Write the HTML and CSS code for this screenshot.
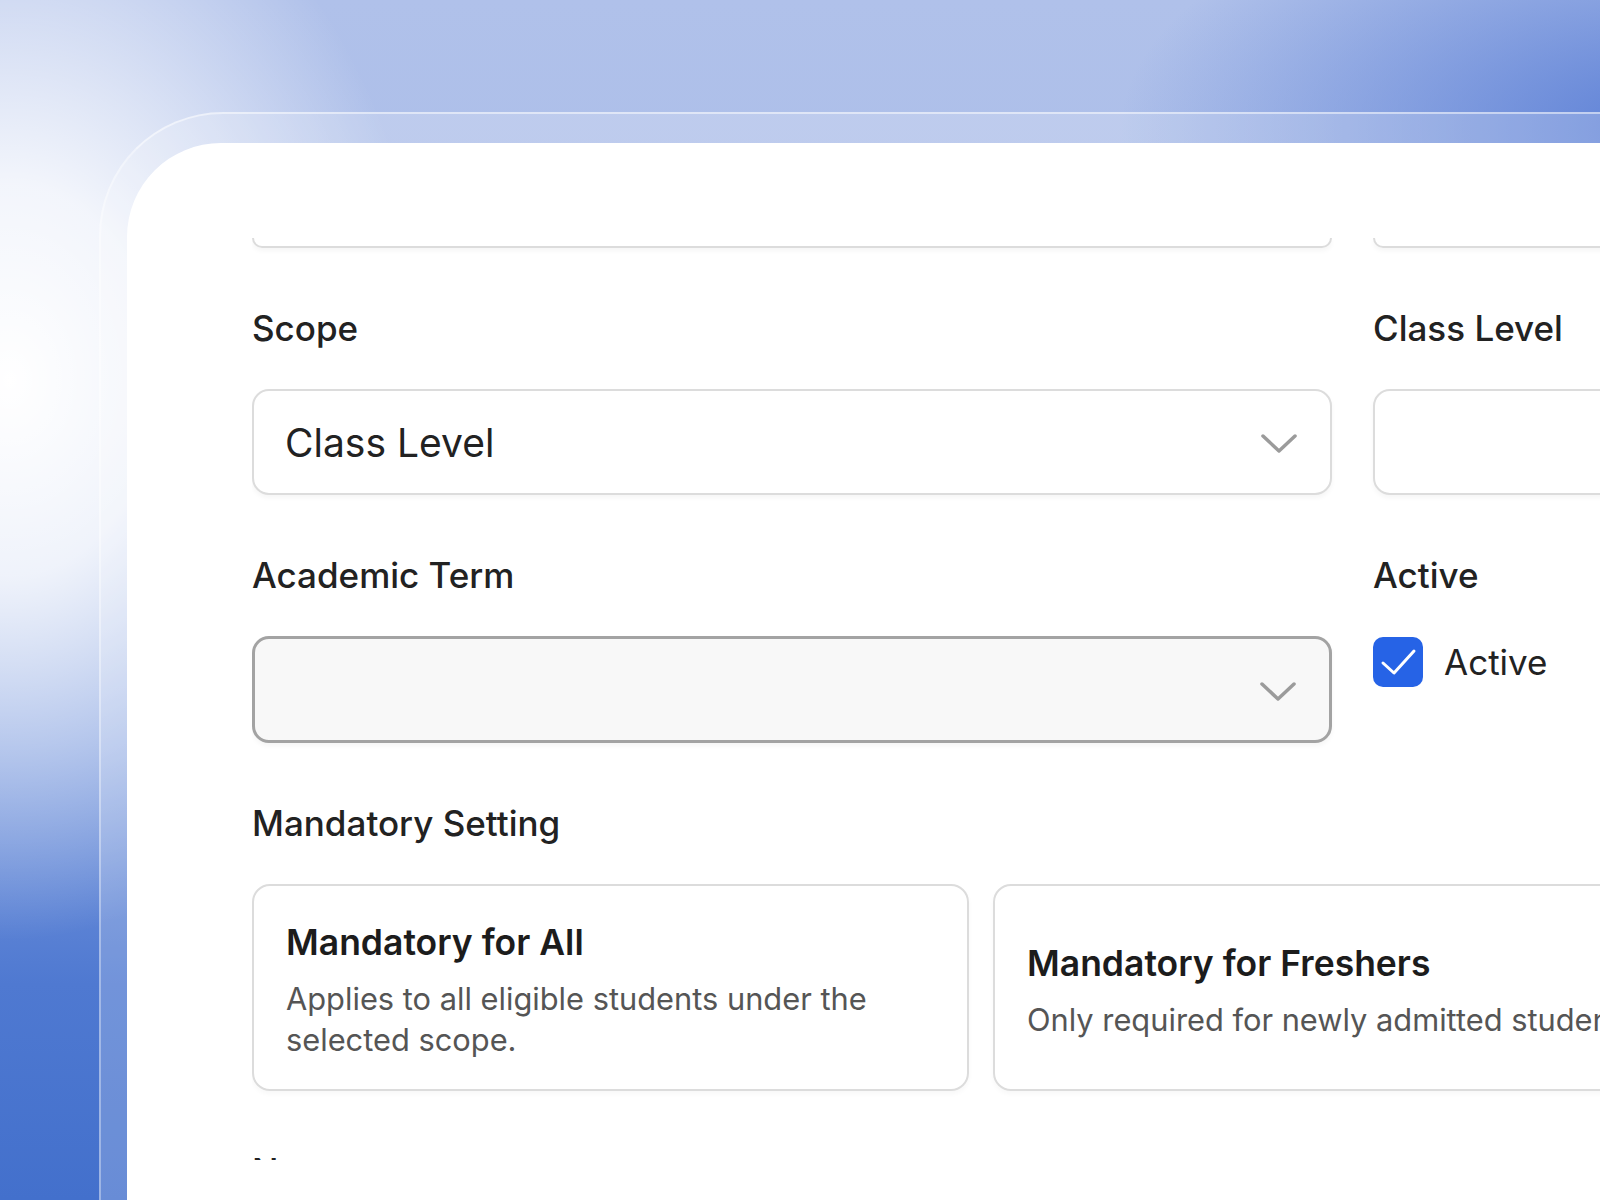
FILE: index.html
```html
<!DOCTYPE html>
<html lang="en">
<head>
    <meta charset="UTF-8">
    <meta name="viewport" content="width=device-width, initial-scale=1.0">
    <title>Course Requirement</title>
    <link rel="stylesheet" href="styles.css">
</head>
<body>
    <div class="frame">
        <div class="card">
            <div class="form-scroll">
                <div class="form-grid">
                    <!-- bottom edge of the fields above, scrolled out of view -->
                    <div class="stub"></div>
                    <div class="stub"></div>

                    <div class="field">
                        <label class="field-label">Scope</label>
                        <div class="select">
                            <span class="select-value">Class Level</span>
                            <svg class="chevron" width="36" height="20" viewBox="0 0 36 20">
                                <path d="M2 2 L18 17 L34 2" fill="none" stroke="#9b9b9b" stroke-width="3.5" stroke-linecap="round" stroke-linejoin="round"/>
                            </svg>
                        </div>
                    </div>
                    <div class="field">
                        <label class="field-label">Class Level</label>
                        <div class="select"></div>
                    </div>

                    <div class="field">
                        <label class="field-label">Academic Term</label>
                        <div class="select select-focus">
                            <span class="select-value"></span>
                            <svg class="chevron" width="36" height="20" viewBox="0 0 36 20">
                                <path d="M2 2 L18 17 L34 2" fill="none" stroke="#9b9b9b" stroke-width="3.5" stroke-linecap="round" stroke-linejoin="round"/>
                            </svg>
                        </div>
                    </div>
                    <div class="field">
                        <label class="field-label">Active</label>
                        <div class="check-row">
                            <span class="checkbox">
                                <svg width="50" height="50" viewBox="0 0 50 50">
                                    <path d="M10 26 L21 36 L41 14" fill="none" stroke="#fff" stroke-width="3" stroke-linecap="round" stroke-linejoin="round"/>
                                </svg>
                            </span>
                            <span class="check-text">Active</span>
                        </div>
                    </div>
                </div>

                <div class="field field-wide">
                    <label class="field-label">Mandatory Setting</label>
                    <div class="option-cards">
                        <div class="option-card">
                            <h3>Mandatory for All</h3>
                            <p>Applies to all eligible students under the selected scope.</p>
                        </div>
                        <div class="option-card">
                            <h3>Mandatory for Freshers</h3>
                            <p>Only required for newly admitted students.</p>
                        </div>
                        <div class="option-card">
                            <h3>Optional</h3>
                            <p>Students may choose to take it.</p>
                        </div>
                    </div>
                </div>

                <div class="field field-wide">
                    <label class="field-label">Notes</label>
                </div>
            </div>
        </div>
    </div>
</body>
</html>
```

FILE: styles.css
```css
html, body {
    height: 100%;
}

body {
    margin: 0;
    overflow: hidden;
    font-family: Inter, "Noto Sans", sans-serif;
    color: #222;
    background:
        radial-gradient(ellipse 420px 560px at 10px 380px, #ffffff 0%, rgba(255, 255, 255, 0.85) 35%, rgba(255, 255, 255, 0) 100%),
        radial-gradient(ellipse 560px 260px at 1680px 130px, #5b7fd6 0%, rgba(91, 127, 214, 0) 100%),
        linear-gradient(180deg, #b0c1ea 0%, #a9bce8 35%, #7c9bde 62%, #4f79d1 82%, #4370cc 100%);
}

.frame {
    box-sizing: border-box;
    height: calc(100% - 112px);
    margin: 112px 0 0 99px;
    padding: 29px 0 0 26px;
    border-top: 2px solid rgba(255, 255, 255, 0.5);
    border-left: 2px solid rgba(255, 255, 255, 0.35);
    border-top-left-radius: 124px;
    background-color: rgba(255, 255, 255, 0.2);
}

.card {
    box-sizing: border-box;
    height: 100%;
    padding: 95px 0 0 125px;
    background-color: #fff;
    border-top-left-radius: 94px;
    overflow: hidden;
}

.form-scroll {
    height: 922px;
    overflow: hidden;
}

.form-grid {
    display: grid;
    grid-template-columns: 1080px 560px;
    column-gap: 41px;
}

.stub {
    height: 8px;
    border: 2px solid #dcdcdc;
    border-top: none;
    border-radius: 0 0 16px 16px;
    box-shadow: 0 3px 5px rgba(0, 0, 0, 0.04);
}

.field {
    margin-top: 60px;
}

.field-label {
    display: block;
    font-size: 35px;
    line-height: 40px;
    font-weight: 500;
    color: #222;
    margin-bottom: 41px;
}

.select {
    box-sizing: border-box;
    height: 106px;
    display: flex;
    align-items: center;
    justify-content: space-between;
    padding: 0 33px 0 31px;
    border: 2px solid #dcdcdc;
    border-radius: 17px;
    background-color: #fff;
    box-shadow: 0 3px 5px rgba(0, 0, 0, 0.04);
}

.select-focus {
    height: 107px;
    border: 3px solid #a3a3a3;
    background-color: #f8f8f8;
}

.select-value {
    font-size: 39px;
    color: #222;
}

.chevron {
    margin-top: 4px;
}

.check-row {
    display: flex;
    align-items: center;
    gap: 21px;
    height: 52px;
}

.checkbox {
    width: 50px;
    height: 50px;
    border-radius: 10px;
    background-color: #2663e6;
    display: flex;
}

.check-text {
    font-size: 35px;
    color: #222;
}

.option-cards {
    display: grid;
    grid-template-columns: repeat(3, 717px);
    gap: 24px;
}

.option-card {
    box-sizing: border-box;
    height: 207px;
    display: flex;
    flex-direction: column;
    justify-content: center;
    padding: 7px 32px 0;
    border: 2px solid #dcdcdc;
    border-radius: 18px;
    box-shadow: 0 3px 5px rgba(0, 0, 0, 0.03);
}

.option-card h3 {
    margin: 0 0 14px;
    font-size: 35.5px;
    line-height: 42px;
    font-weight: 600;
    color: #1c1c1c;
}

.option-card p {
    margin: 0;
    font-size: 30.8px;
    line-height: 41px;
    color: #555;
}
```
